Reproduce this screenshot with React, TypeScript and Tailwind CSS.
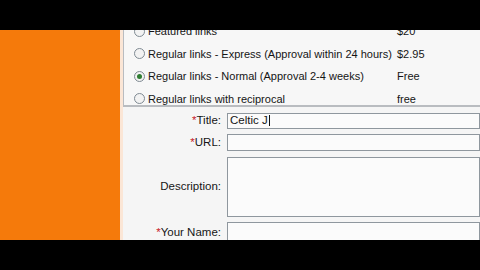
import React from 'react';

const options = [
  { label: 'Featured links', price: '$20', checked: false },
  { label: 'Regular links - Express (Approval within 24 hours)', price: '$2.95', checked: false },
  { label: 'Regular links - Normal (Approval 2-4 weeks)', price: 'Free', checked: true },
  { label: 'Regular links with reciprocal', price: 'free', checked: false },
];

function Radio({ checked }: { checked: boolean }) {
  return (
    <span className="flex h-[11px] w-[11px] shrink-0 items-center justify-center rounded-full border border-[#7f8a93] bg-[#f2f2f2]">
      {checked && <span className="h-[5px] w-[5px] rounded-full bg-[#2f7d32]" />}
    </span>
  );
}

function Label({ text, required }: { text: string; required?: boolean }) {
  return (
    <span className="w-[98px] shrink-0 text-right text-[11.5px] text-[#151515]">
      {required && <span className="text-[#c8202a]">*</span>}
      {text}
    </span>
  );
}

export default function App() {
  return (
    <div className="flex h-[270px] w-[480px] flex-col overflow-hidden bg-black" style={{ fontFamily: '"Liberation Sans", Arial, sans-serif' }}>
      <div className="h-[30px] shrink-0 bg-black" />

      <div className="flex h-[210px] shrink-0">
        {/* Orange side panel */}
        <div className="w-[120px] shrink-0 bg-[#f57a0b]" />
        <div className="w-[3px] shrink-0 bg-[#fbe6d6]" />

        <div className="flex flex-1 flex-col overflow-hidden bg-[#f5f5f5]">
          {/* Link type choices */}
          <div className="h-[77px] shrink-0 overflow-hidden border-b-2 border-l border-[#b9bcc0] bg-[#f7f7f7]">
            <div className="-mt-[10px] flex flex-col">
              {options.map((o) => (
                <div key={o.label} className="flex h-[22.5px] items-center pl-[10px] text-[11px] text-[#151515]">
                  <Radio checked={o.checked} />
                  <span className="ml-[3px] w-[249px] shrink-0 whitespace-nowrap">{o.label}</span>
                  <span>{o.price}</span>
                </div>
              ))}
            </div>
          </div>

          {/* Form fields */}
          <div className="mt-[5px] flex flex-col gap-[5px]">
            <div className="flex items-center gap-[6px]">
              <Label text="Title:" required />
              <div className="flex h-[16px] flex-1 items-center border border-[#8f979e] bg-[#fbfbfb] pl-[2px] text-[11.5px] text-[#151515]">
                Celtic J<span className="ml-[1px] h-[11px] w-[1px] bg-[#111]" />
              </div>
            </div>
            <div className="flex items-center gap-[6px]">
              <Label text="URL:" required />
              <div className="h-[17px] flex-1 border border-[#8f979e] bg-[#fbfbfb]" />
            </div>
            <div className="flex items-center gap-[6px]">
              <Label text="Description:" />
              <div className="h-[60px] flex-1 border border-[#8f979e] bg-[#fbfbfb]" />
            </div>
            <div className="flex items-start gap-[6px]">
              <span className="mt-[2px] flex">
                <Label text="Your Name:" required />
              </span>
              <div className="h-[24px] flex-1 border border-[#8f979e] bg-[#fbfbfb]" />
            </div>
          </div>
        </div>
      </div>

      <div className="h-[30px] shrink-0 bg-black" />
    </div>
  );
}
